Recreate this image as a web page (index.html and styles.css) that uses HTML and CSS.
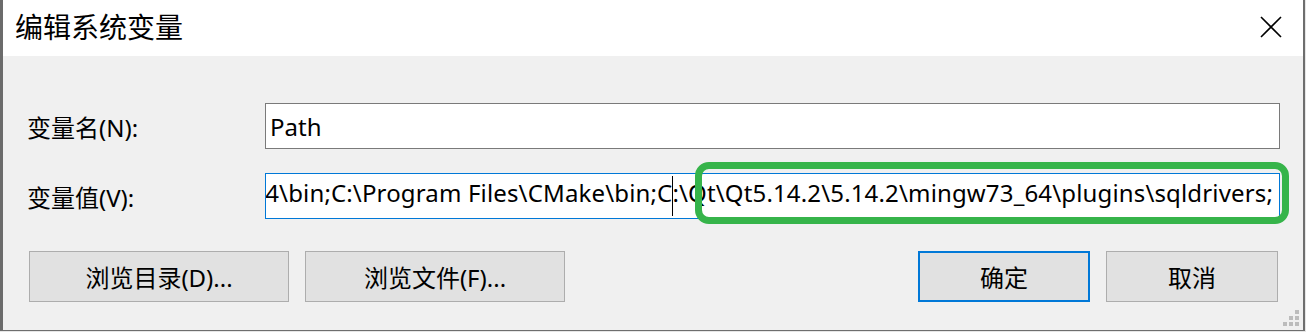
FILE: index.html
```html
<!DOCTYPE html>
<html>
<head>
    <meta charset="UTF-8">
    <title>编辑系统变量</title>
    <link rel="stylesheet" href="styles.css">
</head>
<body>
    <div class="window">
      <div class="titlebar">
        <span class="title">编辑系统变量</span>
        <svg class="close" width="22" height="22" viewBox="0 0 22 22">
          <path d="M1 1 L21 21 M21 1 L1 21" stroke="#000" stroke-width="1.6" fill="none"/>
        </svg>
      </div>
      <div class="content">
        <div class="row">
          <label>变量名(N):</label>
          <div class="field"><span class="text">Path</span></div>
        </div>
        <div class="row">
          <label>变量值(V):</label>
          <div class="field focused"><span class="text">4\bin;C:\Program Files\CMake\bin;C<span class="caret"></span>:\Qt\Qt5.14.2\5.14.2\mingw73_64\plugins\sqldrivers;</span></div>
        </div>
        <div class="buttons">
          <div class="group">
            <button type="button" class="wide">浏览目录(D)...</button>
            <button type="button" class="wide">浏览文件(F)...</button>
          </div>
          <div class="group">
            <button type="button" class="narrow default">确定</button>
            <button type="button" class="narrow">取消</button>
          </div>
        </div>
      </div>
      <!-- green annotation drawn over the value field -->
      <div class="highlight"></div>
      <div class="grip">
        <i style="grid-area: 1 / 3"></i>
        <i style="grid-area: 2 / 2"></i><i style="grid-area: 2 / 3"></i>
        <i style="grid-area: 3 / 1"></i><i style="grid-area: 3 / 2"></i><i style="grid-area: 3 / 3"></i>
      </div>
    </div>
</body>
</html>
```

FILE: styles.css
```css
/* desktop behind the dialog */
body {
  margin: 0;
  background-color: #e6e6e6;
  font-family: "Noto Sans", "Noto Sans CJK SC", sans-serif;
  color: #000;
}

/* dialog frame */
.window {
  position: relative;
  box-sizing: border-box;
  width: 1305px;
  height: 331px;
  border-left: 3px solid #6b6b6b;
  border-right: 2px solid #6e6e6e;
  border-bottom: 1px solid #6e6e6e;
  background-color: #f0f0f0;
  display: flex;
  flex-direction: column;
}

/* white caption bar */
.titlebar {
  height: 56px;
  background-color: #fff;
  display: flex;
  align-items: center;
  justify-content: space-between;
  padding: 0 21px 0 12px;
}
.title {
  font-size: 28px;
  line-height: 1;
  margin-top: -2px;
}
.close {
  margin-top: -2px;
}

.content {
  padding: 47px 23px 0 24px;
  display: flex;
  flex-direction: column;
}

.row {
  display: flex;
  align-items: center;
  margin-bottom: 24px;
}
.row label {
  width: 238px;
  font-size: 24px;
}

/* edit boxes */
.field {
  flex: 1;
  height: 46px;
  box-sizing: border-box;
  border: 1px solid #7a7a7a;
  background-color: #fff;
  display: flex;
  align-items: center;
  padding: 0 4px;
  overflow: hidden;
  white-space: nowrap;
  font-size: 24px;
}
.field.focused {
  border-color: #0078d7;
  justify-content: flex-end;
  padding-right: 6px;
  letter-spacing: 0.15px;
}
.caret {
  display: inline-block;
  width: 1px;
  height: 40px;
  background-color: #000;
  vertical-align: middle;
  margin: 0 -1px 0 0;
}

.buttons {
  display: flex;
  justify-content: space-between;
  margin-top: 8px;
  padding: 0 2px;
}
.group {
  display: flex;
  gap: 16px;
}
button {
  height: 51px;
  box-sizing: border-box;
  border: 1px solid #adadad;
  background-color: #e1e1e1;
  font-family: "Noto Sans", "Noto Sans CJK SC", sans-serif;
  font-size: 24px;
  color: #000;
  padding: 0;
}
button.wide {
  width: 260px;
}
button.narrow {
  width: 172px;
}
button.default {
  border: 2px solid #0078d7;
}

/* rounded green marker */
.highlight {
  position: absolute;
  left: 692px;
  top: 162px;
  width: 594px;
  height: 62px;
  box-sizing: border-box;
  border: 7px solid #36b44a;
  border-radius: 14px;
}

/* resize grip */
.grip {
  position: absolute;
  right: 4px;
  bottom: 4px;
  display: grid;
  grid-template-columns: repeat(3, 4px);
  grid-template-rows: repeat(3, 4px);
  gap: 2px;
}
.grip i {
  background-color: #bcbcbc;
}
```
